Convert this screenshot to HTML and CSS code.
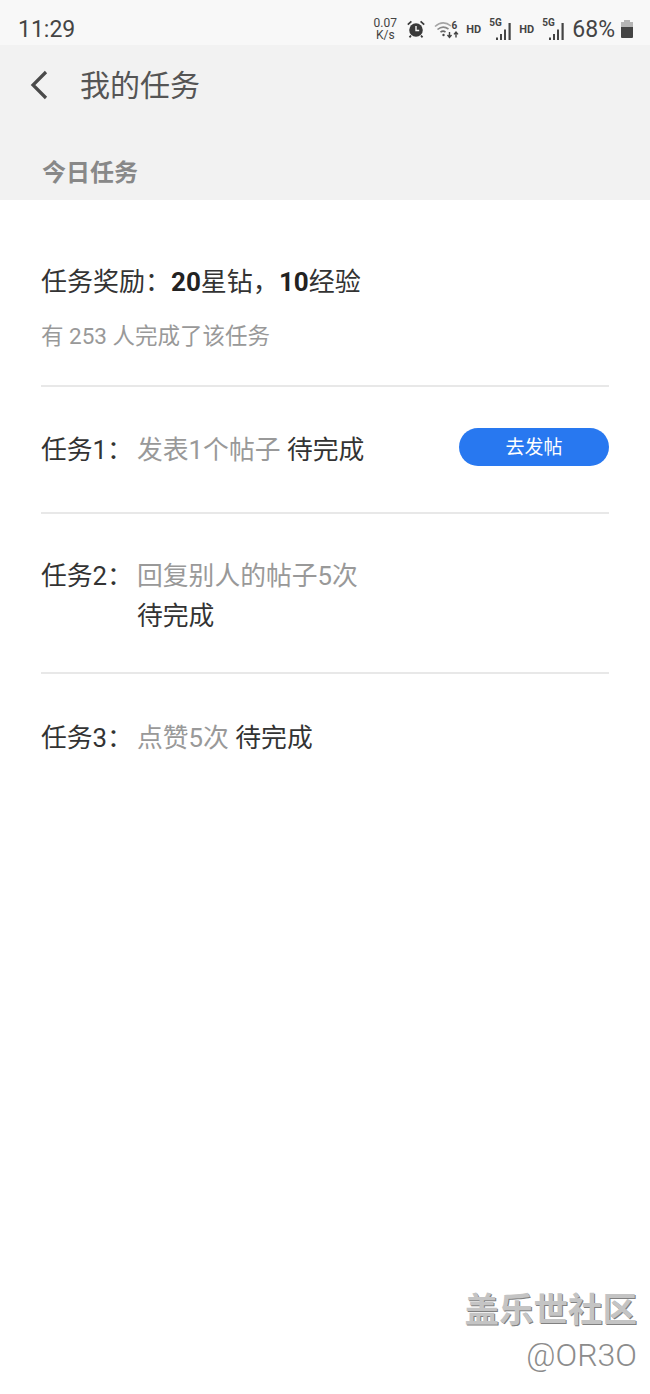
FILE: index.html
```html
<!DOCTYPE html>
<html lang="zh-CN">
<head>
    <meta charset="UTF-8">
    <meta name="viewport" content="width=device-width, initial-scale=1.0">
    <title>我的任务</title>
    <link rel="stylesheet" href="styles.css">
</head>
<body>
    <!-- Status bar -->
    <div class="status-bar">
        <span class="clock">11:29</span>
        <div class="status-icons">
            <span class="net-speed">0.07<br>K/s</span>
            <svg class="icon-alarm" width="20" height="20" viewBox="0 0 20 20">
                <circle cx="10" cy="11" r="6.8" fill="#3a3a3a"/>
                <path d="M10 7v4.500h3.200" fill="none" stroke="#f7f7f7" stroke-width="1.400"/>
                <path d="M1.800 5.600 5.400 2.400M18.200 5.600 14.600 2.400M5 16.500l-1.500 1.800M15 16.500l1.500 1.800" stroke="#3a3a3a" stroke-width="1.800" fill="none"/>
            </svg>
            <svg class="icon-wifi" width="26" height="20" viewBox="0 0 26 20">
                <path d="M1 7.500C6 3 12 3 17 7" fill="none" stroke="#a5a5a5" stroke-width="1.600"/>
                <path d="M3.500 10.500C7 7.500 11 7.500 14.500 10" fill="none" stroke="#888" stroke-width="1.600"/>
                <path d="M6.500 13.200C8 12 10 12 11.500 13" fill="none" stroke="#666" stroke-width="1.600"/>
                <circle cx="9.500" cy="16" r="1.200" fill="#444"/>
                <path d="M15.500 13v5M13.500 16l2 2.400 2-2.400M22 18.400v-5M20 15.400l2-2.400 2 2.400" fill="none" stroke="#444" stroke-width="1.400"/>
                <text x="17.500" y="9.500" class="wifi-six">6</text>
            </svg>
            <span class="hd">HD</span>
            <span class="signal">
                <span class="five-g">5G</span>
                <svg width="18" height="17" viewBox="0 0 18 17">
                    <path d="M1 14.500h2V17H1zM5 11h2v6H5zM9 6.500h2V17H9zM13.500 0h2.200v17h-2.200z" fill="#444"/>
                </svg>
            </span>
            <span class="hd">HD</span>
            <span class="signal">
                <span class="five-g">5G</span>
                <svg width="18" height="17" viewBox="0 0 18 17">
                    <path d="M1 14.500h2V17H1zM5 11h2v6H5zM9 6.500h2V17H9zM13.500 0h2.200v17h-2.200z" fill="#444"/>
                </svg>
            </span>
            <span class="battery-text">68%</span>
            <svg class="icon-battery" width="14" height="18" viewBox="0 0 14 18">
                <path d="M4 0h6v2h3v5H1V2h3z" fill="#b5b5b5"/>
                <path d="M1 7h12v10a1 1 0 0 1-1 1H2a1 1 0 0 1-1-1z" fill="#444"/>
            </svg>
        </div>
    </div>

    <!-- Header -->
    <div class="header">
        <div class="title-row">
            <svg class="back" width="20" height="32" viewBox="0 0 20 32">
                <path d="M17 3 4 16l13 13" fill="none" stroke="#4a4a4a" stroke-width="3.200"/>
            </svg>
            <h1>我的任务</h1>
        </div>
        <h2>今日任务</h2>
    </div>

    <!-- Tasks -->
    <div class="content">
        <div class="reward">
            <p class="reward-title">任务奖励：<b>20</b>星钻，<b>10</b>经验</p>
            <p class="reward-count">有 253 人完成了该任务</p>
        </div>

        <div class="task-row task-one">
            <span class="task-label">任务1：</span>
            <div class="task-text"><span class="muted">发表1个帖子</span> 待完成</div>
            <button class="go-btn">去发帖</button>
        </div>

        <div class="task-row task-two">
            <span class="task-label">任务2：</span>
            <div class="task-text"><span class="muted">回复别人的帖子5次</span><br>待完成</div>
        </div>

        <div class="task-row task-three">
            <span class="task-label">任务3：</span>
            <div class="task-text"><span class="muted">点赞5次</span> 待完成</div>
        </div>
    </div>

    <!-- Watermark -->
    <div class="watermark">
        <div class="wm-name">盖乐世社区</div>
        <div class="wm-user">@OR3O</div>
    </div>
</body>
</html>
```

FILE: styles.css
```css
* {
    margin: 0;
    padding: 0;
    box-sizing: border-box;
}

body {
    position: relative;
    height: 1394px;
    overflow: hidden;
    background: #fff;
    color: #2b2b2b;
    font-family: "Roboto", "Noto Sans CJK SC", sans-serif;
}

.status-bar {
    display: flex;
    justify-content: space-between;
    align-items: center;
    height: 45px;
    padding: 13px 16px 0 18px;
    background: #f8f8f8;
    color: #444;
}

.clock {
    font-size: 23px;
}

.status-icons {
    display: flex;
    align-items: center;
}

.net-speed {
    width: 26px;
    font-size: 12px;
    line-height: 12px;
    text-align: center;
}

.icon-alarm {
    margin-left: 8px;
}

.icon-wifi {
    margin-left: 8px;
}

.wifi-six {
    font-size: 10px;
    font-weight: 700;
    fill: #444;
}

.hd {
    width: 16px;
    margin-left: 6px;
    font-size: 11px;
    font-weight: 700;
    white-space: nowrap;
}

.signal {
    position: relative;
    display: flex;
    width: 24px;
    height: 22px;
    margin-left: 7px;
    align-items: flex-end;
    justify-content: flex-end;
}

.five-g {
    position: absolute;
    top: -1px;
    left: 0;
    font-size: 10px;
    font-weight: 700;
    line-height: 11px;
}

.battery-text {
    margin-left: 6px;
    font-size: 23px;
}

.icon-battery {
    margin-left: 5px;
}

.header {
    height: 155px;
    background: #f2f2f2;
}

.title-row {
    display: flex;
    align-items: center;
    height: 79px;
    padding-left: 29px;
}

.title-row h1 {
    margin-left: 31px;
    padding-bottom: 4px;
    font-size: 30px;
    font-weight: 400;
    color: #555;
}

.header h2 {
    margin-top: 33px;
    padding-left: 42px;
    font-size: 24px;
    line-height: 32px;
    font-weight: 700;
    color: #888;
}

.content {
    padding: 0 41px 0 41px;
}

.reward {
    height: 187px;
    padding-top: 63px;
    border-bottom: 2px solid #e8e8e8;
}

.reward-title {
    font-size: 26px;
    line-height: 38px;
    color: #333;
}

.reward-title b {
    font-weight: 700;
    color: #222;
}

.reward-count {
    margin-top: 19px;
    font-size: 22.500px;
    line-height: 32px;
    color: #999;
}

.task-row {
    display: flex;
    align-items: flex-start;
    font-size: 25.800px;
    line-height: 40px;
    border-bottom: 2px solid #e8e8e8;
}

.task-label {
    width: 96px;
    flex-shrink: 0;
    color: #333;
}

.task-text {
    flex: 1;
    color: #333;
}

.muted {
    color: #999;
}

.task-one {
    height: 127px;
    padding-top: 43px;
}

.task-two {
    height: 160px;
    padding-top: 42px;
}

.task-three {
    padding-top: 44px;
    border-bottom: none;
}

.go-btn {
    width: 150px;
    height: 38px;
    margin-top: -2px;
    padding-bottom: 3px;
    border: none;
    border-radius: 19px;
    background: #2878f0;
    color: #fff;
    font-family: inherit;
    font-size: 19px;
}

.watermark {
    position: absolute;
    right: 13px;
    bottom: 21px;
    text-align: right;
    color: #8c8c8c;
}

.wm-name {
    font-size: 34.500px;
    line-height: 42px;
    font-weight: 700;
    color: #c4c4c4;
    text-shadow: 1px 1px 0 #808080;
}

.wm-user {
    margin-top: 6px;
    font-size: 32px;
    line-height: 36px;
    font-weight: 300;
}
```
